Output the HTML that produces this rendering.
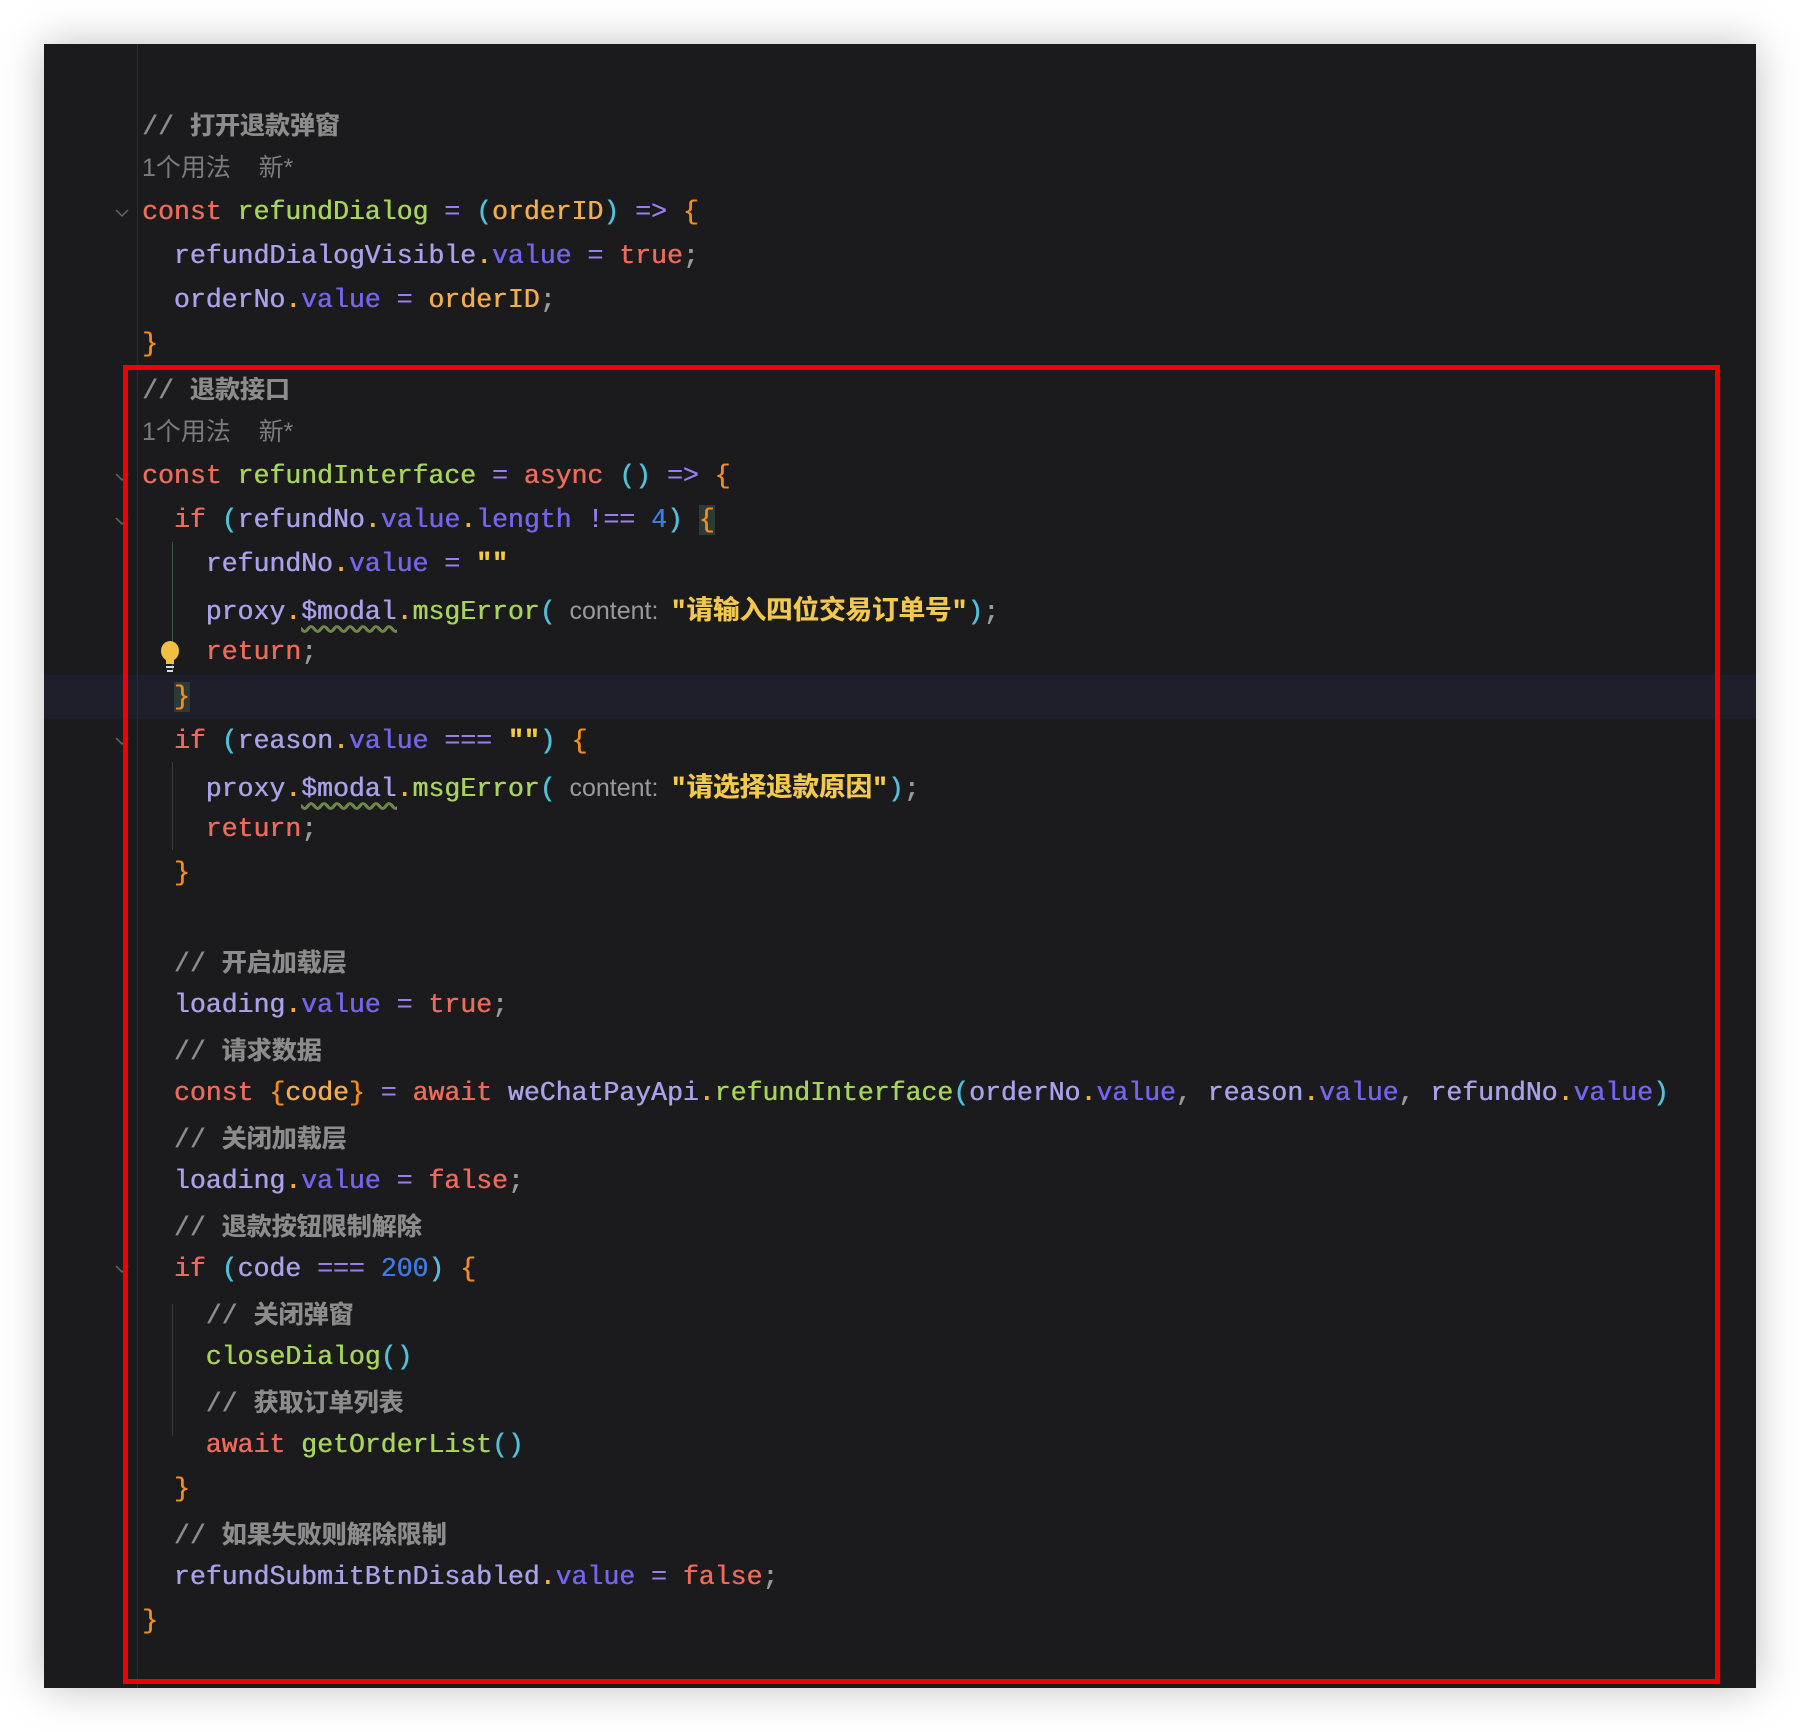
<!DOCTYPE html>
<html><head><meta charset="utf-8"><style>
html,body{margin:0;padding:0;background:#fff;width:1800px;height:1732px;overflow:hidden}
#p{position:absolute;left:44px;top:44px;width:1712px;height:1644px;background:#1b1b1d;box-shadow:0 0 40px rgba(0,0,0,.25)}
.gut{position:absolute;left:137px;top:44px;width:1px;height:1644px;background:#2c2c30}
.hl{position:absolute;left:44px;top:675px;width:1712px;height:44px;background:#1f1f2b}
.l{position:absolute;left:142px;height:44px;line-height:44px;white-space:pre;font-family:"Liberation Mono","Noto Sans CJK SC",monospace;font-size:26.5px;color:#a9a1e9;text-shadow:0.5px 0 0 currentColor}
.c{color:#8c8c8c}.c .z{font-family:"Noto Sans CJK SC",sans-serif;font-weight:700;font-size:25px}
.h{font-family:"Liberation Sans","Noto Sans CJK SC",sans-serif;font-size:25px;color:#7c7c7c;text-shadow:none}
.k{color:#ee6a5b}.f{color:#a6d55a}.v{color:#7465ee}.o{color:#9d7cf0}.pr{color:#4fc1d9}.pa{color:#f3ad4e}.b{color:#f08d1e}.s{color:#f2c94c;font-weight:700}.s .z{font-family:"Noto Sans CJK SC",sans-serif}.n{color:#3f7ae0}.d{color:#f0b23a}.sc{color:#9a9a9a}
.hint{font-family:"Liberation Sans",sans-serif;font-size:25px;color:#9a9a9a;margin:0 12px 0 14px;text-shadow:none}
.bb{background:#2c3b36}
.sq{text-decoration:underline wavy #6a8a3a;text-underline-offset:6px}
.g{position:absolute;left:172px;width:1px;background:#3a3a3e}
.ar{position:absolute;left:115px;width:14px;height:10px}
#box{position:absolute;left:123px;top:365px;width:1587px;height:1309px;border:5px solid #f00000}
</style></head><body>
<div id="p"></div><div class="hl"></div><div class="gut"></div>
<div class="g" style="top:542px;height:130px;background:#3d5a4a"></div>
<div class="g" style="top:762px;height:88px"></div>
<div class="g" style="top:1304px;height:132px"></div>
<svg class="ar" style="top:208px" viewBox="0 0 14 10"><path d="M1 2l6 6 6-6" stroke="#666" fill="none" stroke-width="1.5"/></svg>
<svg class="ar" style="top:472px" viewBox="0 0 14 10"><path d="M1 2l6 6 6-6" stroke="#666" fill="none" stroke-width="1.5"/></svg>
<svg class="ar" style="top:516px" viewBox="0 0 14 10"><path d="M1 2l6 6 6-6" stroke="#666" fill="none" stroke-width="1.5"/></svg>
<svg class="ar" style="top:736px" viewBox="0 0 14 10"><path d="M1 2l6 6 6-6" stroke="#666" fill="none" stroke-width="1.5"/></svg>
<svg class="ar" style="top:1264px" viewBox="0 0 14 10"><path d="M1 2l6 6 6-6" stroke="#666" fill="none" stroke-width="1.5"/></svg>
<svg style="position:absolute;left:159px;top:640px" width="22" height="34" viewBox="0 0 22 34"><ellipse cx="11" cy="11" rx="9" ry="10" fill="#f0c040"/><rect x="7" y="20" width="8" height="4" fill="#f0c040"/><rect x="7" y="26" width="8" height="2" fill="#ddd"/><rect x="8" y="30" width="6" height="2" fill="#ddd"/></svg>

<div class="l c" style="top:102px">// <span class="z">打开退款弹窗</span></div>
<div class="l h" style="top:146px">1个用法&nbsp;&nbsp;&nbsp; 新*</div>
<div class="l" style="top:190px"><span class="k">const</span> <span class="f">refundDialog</span> <span class="o">=</span> <span class="pr">(</span><span class="pa">orderID</span><span class="pr">)</span> <span class="o">=&gt;</span> <span class="b">{</span></div>
<div class="l" style="top:234px">  refundDialogVisible<span class="d">.</span><span class="v">value</span> <span class="o">=</span> <span class="k">true</span><span class="sc">;</span></div>
<div class="l" style="top:278px">  orderNo<span class="d">.</span><span class="v">value</span> <span class="o">=</span> <span class="pa">orderID</span><span class="sc">;</span></div>
<div class="l" style="top:322px"><span class="b">}</span></div>
<div class="l c" style="top:366px">// <span class="z">退款接口</span></div>
<div class="l h" style="top:410px">1个用法&nbsp;&nbsp;&nbsp; 新*</div>
<div class="l" style="top:454px"><span class="k">const</span> <span class="f">refundInterface</span> <span class="o">=</span> <span class="k">async</span> <span class="pr">()</span> <span class="o">=&gt;</span> <span class="b">{</span></div>
<div class="l" style="top:498px">  <span class="k">if</span> <span class="pr">(</span>refundNo<span class="d">.</span><span class="v">value</span><span class="d">.</span><span class="v">length</span> <span class="o">!==</span> <span class="n">4</span><span class="pr">)</span> <span class="b bb">{</span></div>
<div class="l" style="top:542px">    refundNo<span class="d">.</span><span class="v">value</span> <span class="o">=</span> <span class="s">""</span></div>
<div class="l" style="top:586px">    proxy<span class="d">.</span><span class="sq">$modal</span><span class="d">.</span><span class="f">msgError</span><span class="pr">(</span><span class="hint">content:</span><span class="s">"<span class="z">请输入四位交易订单号</span>"</span><span class="pr">)</span><span class="sc">;</span></div>
<div class="l" style="top:630px">    <span class="k">return</span><span class="sc">;</span></div>
<div class="l" style="top:675px">  <span class="b bb">}</span></div>
<div class="l" style="top:719px">  <span class="k">if</span> <span class="pr">(</span>reason<span class="d">.</span><span class="v">value</span> <span class="o">===</span> <span class="s">""</span><span class="pr">)</span> <span class="b">{</span></div>
<div class="l" style="top:763px">    proxy<span class="d">.</span><span class="sq">$modal</span><span class="d">.</span><span class="f">msgError</span><span class="pr">(</span><span class="hint">content:</span><span class="s">"<span class="z">请选择退款原因</span>"</span><span class="pr">)</span><span class="sc">;</span></div>
<div class="l" style="top:807px">    <span class="k">return</span><span class="sc">;</span></div>
<div class="l" style="top:851px">  <span class="b">}</span></div>
<div class="l c" style="top:939px">  // <span class="z">开启加载层</span></div>
<div class="l" style="top:983px">  loading<span class="d">.</span><span class="v">value</span> <span class="o">=</span> <span class="k">true</span><span class="sc">;</span></div>
<div class="l c" style="top:1027px">  // <span class="z">请求数据</span></div>
<div class="l" style="top:1071px">  <span class="k">const</span> <span class="b">{</span><span class="pa">code</span><span class="b">}</span> <span class="o">=</span> <span class="k">await</span> weChatPayApi<span class="d">.</span><span class="f">refundInterface</span><span class="pr">(</span>orderNo<span class="d">.</span><span class="v">value</span><span class="sc">,</span> reason<span class="d">.</span><span class="v">value</span><span class="sc">,</span> refundNo<span class="d">.</span><span class="v">value</span><span class="pr">)</span></div>
<div class="l c" style="top:1115px">  // <span class="z">关闭加载层</span></div>
<div class="l" style="top:1159px">  loading<span class="d">.</span><span class="v">value</span> <span class="o">=</span> <span class="k">false</span><span class="sc">;</span></div>
<div class="l c" style="top:1203px">  // <span class="z">退款按钮限制解除</span></div>
<div class="l" style="top:1247px">  <span class="k">if</span> <span class="pr">(</span>code <span class="o">===</span> <span class="n">200</span><span class="pr">)</span> <span class="b">{</span></div>
<div class="l c" style="top:1291px">    // <span class="z">关闭弹窗</span></div>
<div class="l" style="top:1335px">    <span class="f">closeDialog</span><span class="pr">()</span></div>
<div class="l c" style="top:1379px">    // <span class="z">获取订单列表</span></div>
<div class="l" style="top:1423px">    <span class="k">await</span> <span class="f">getOrderList</span><span class="pr">()</span></div>
<div class="l" style="top:1467px">  <span class="b">}</span></div>
<div class="l c" style="top:1511px">  // <span class="z">如果失败则解除限制</span></div>
<div class="l" style="top:1555px">  refundSubmitBtnDisabled<span class="d">.</span><span class="v">value</span> <span class="o">=</span> <span class="k">false</span><span class="sc">;</span></div>
<div class="l" style="top:1599px"><span class="b">}</span></div>
<div id="box"></div>
</body></html>
